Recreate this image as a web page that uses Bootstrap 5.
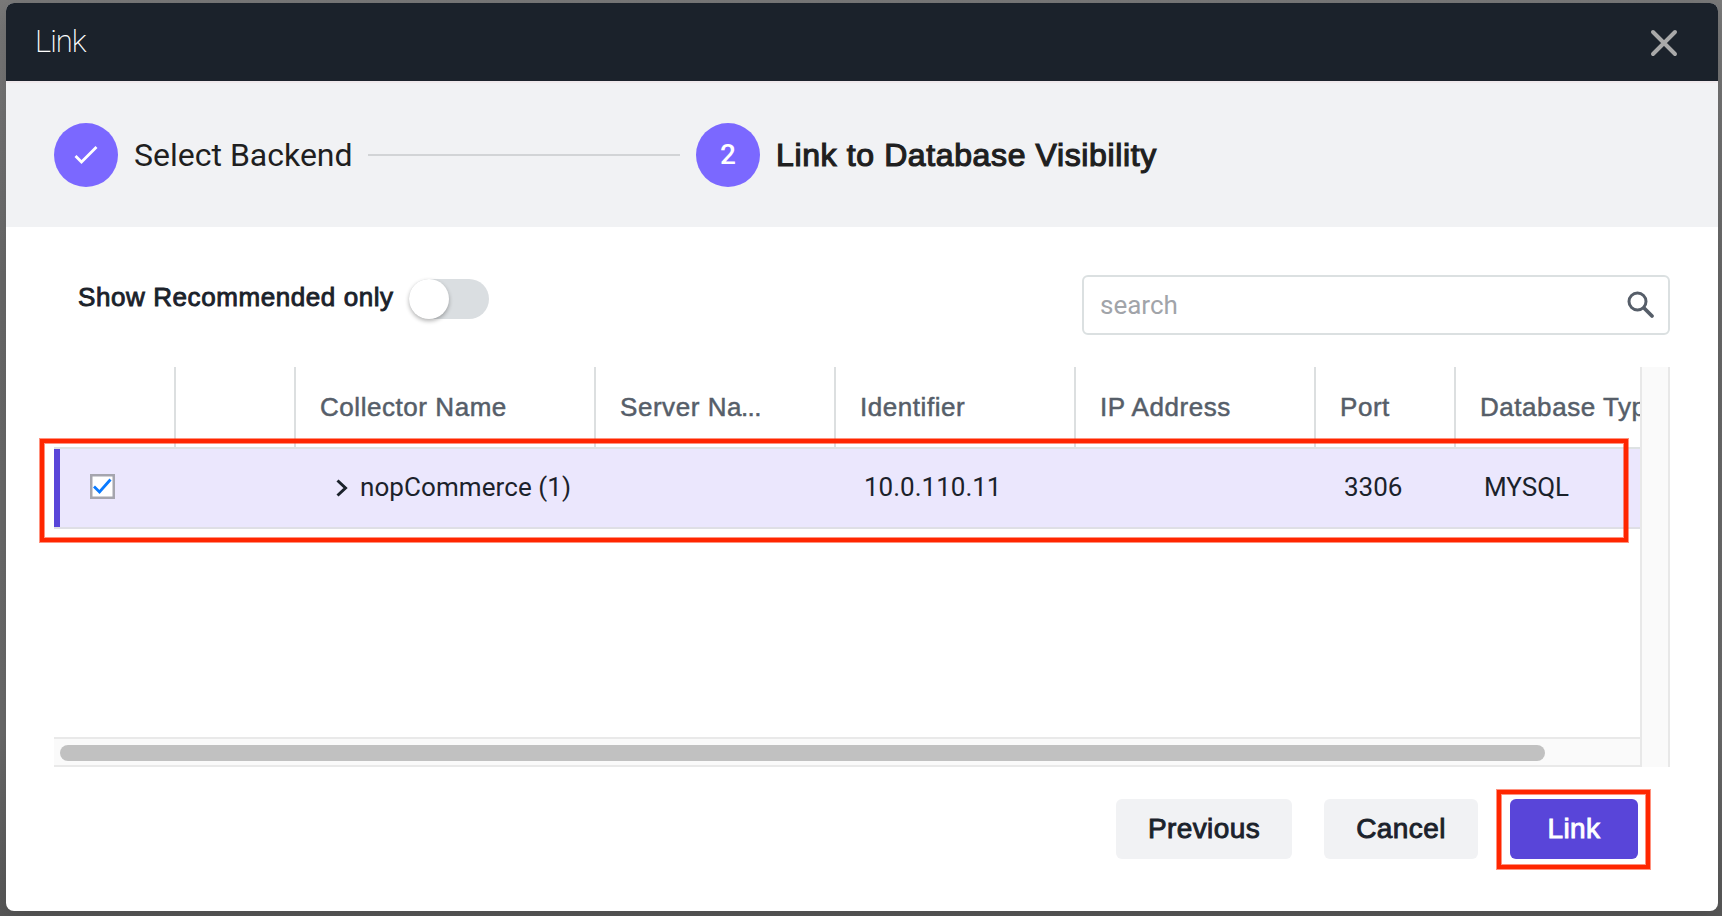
<!DOCTYPE html>
<html lang="en">
<head>
<meta charset="utf-8">
<meta name="viewport" content="width=device-width, initial-scale=1">
<title>Link</title>
<link href="https://cdn.jsdelivr.net/npm/bootstrap@5.3.0/dist/css/bootstrap.min.css" rel="stylesheet">
<style>
  body { background: linear-gradient(#7a7a7a, #696969 30%, #6b6b6b 80%, #585858); height: 916px; overflow: hidden; padding: 3px 4px 5px 6px; font-family: Roboto, sans-serif; font-size: 26px; line-height: 1.2; color: #1b222b; }
  .dialog { height: 908px; background: #fff; border-radius: 8px; overflow: hidden; box-shadow: 0 6px 24px rgba(0,0,0,.15); }
  .dialog-head { height: 80px; background: #1b222b; background-clip: padding-box; border-bottom: 2px solid #efe9ec; padding: 2px 39px 0 29px; }
  .dialog-title { font-family: Roboto, sans-serif; font-weight: 200; font-size: 31px; letter-spacing: -1px; color: #fff; padding-bottom: 2px; }
  .helv { font-family: "Liberation Sans", sans-serif; -webkit-text-stroke: .5px currentColor; }
  .steps { height: 144px; background: #f1f2f4; padding: 0 48px; gap: 16px; font-size: 32px; color: #1f1f1f; }
  .dot { width: 64px; height: 64px; background: #7b68ff; color: #fff; font-size: 28px; font-weight: 500; }
  .step-a { width: 218px; }
  .rule { width: 312px; height: 2px; background: #d2d4d6; }
  .step-now { font-size: 32px; letter-spacing: .62px; -webkit-text-stroke-width: 1.2px; }
  .tools { height: 140px; padding: 48px 48px 0 72px; }
  .tools-label { width: 315px; font-size: 26px; letter-spacing: .58px; -webkit-text-stroke-width: .9px; margin-top: 7px; }
  .toggle { width: 80px; height: 40px; background: #dadee1; margin: 4px 0 0 16px; }
  .knob { width: 40px; height: 40px; background: #fff; box-shadow: 0 2px 4px rgba(0,0,0,.3); }
  .search { width: 588px; height: 60px; border: 2px solid #dbe0e1; border-radius: 6px; padding: 0 13px 0 16px; }
  .search input { font-size: 26px; line-height: 1.2; color: #1b222b; padding: 2px 0 0; }
  .search input::placeholder { color: #a1a4a9; opacity: 1; }
  .search svg { margin-bottom: 1px; }
  .grid-wrap { height: 400px; margin: 0 48px; }
  .grid-main { width: 1586px; }
  .grid-row { display: grid; grid-template-columns: 122px 120px 300px 240px 240px 240px 140px 184px; }
  .grid-head { height: 82px; border-bottom: 2px solid #dee2e3; color: #565e69; letter-spacing: .55px; }
  .grid-head > div { border-right: 2px solid #dcdfe0; padding: 25px 0 0 24px; white-space: nowrap; overflow: hidden; }
  .grid-head > div:last-child { border: 0; }
  .dots { letter-spacing: -.6px; margin-left: -1px; }
  .grid-head, .grid-data { width: 1586px; }
  .grid-data { height: 80px; background: #ebe7fd; background-clip: padding-box; border-bottom: 2px solid #dfdfe5; position: relative; align-items: center; }
  .grid-data > div { padding-left: 28px; white-space: nowrap; }
  .grid-data > div:first-child { align-self: stretch; border-left: 6px solid #5945d9; padding: 0 0 3px 30px; }
  .chev { margin: 0 12px 0 40px; }
  .node-name { letter-spacing: .08px; }
  .hbar { height: 30px; background: #fafafa; border: solid #e9e9e9; border-width: 2px 0; padding: 6px; }
  .thumb { width: 1485px; height: 16px; background: #c1c1c1; border-radius: 8px; }
  .vbar { width: 30px; background: #fafafa; border: solid #e8e8e8; border-width: 0 2px; }
  .mark-box { position: absolute; border: 4px solid #ff2600; box-shadow: 0 0 0 1px rgba(255,38,0,.5), inset 0 0 0 1px rgba(255,38,0,.5); pointer-events: none; }
  .row-mark { left: -14px; top: -10px; width: 1588px; height: 103px; }
  .btn-mark { left: -13px; top: -9px; width: 153px; height: 79px; }
  .foot { padding: 32px 80px 0 0; gap: 32px; }
  .foot .btn { height: 60px; border-radius: 6px; border: 0; padding: 0; font-family: "Liberation Sans", sans-serif; font-size: 28px; letter-spacing: .4px; line-height: 1; color: #1b222b; background: #f1f2f4; -webkit-text-stroke: .9px currentColor; }
  .foot .go { width: 128px; background: #5945d9; color: #fff; }
  svg { display: block; }
</style>
<script src="https://cdn.jsdelivr.net/npm/bootstrap@5.3.0/dist/js/bootstrap.bundle.min.js"></script>
</head>
<body>
<div class="dialog">
  <header class="dialog-head d-flex align-items-center justify-content-between">
    <div class="dialog-title">Link</div>
    <svg width="30" height="30" viewBox="0 0 30 30" stroke="#a9a9a9" stroke-width="4" stroke-linecap="round"><path d="M4 4 26 26M26 4 4 26"/></svg>
  </header>
  <div class="steps d-flex align-items-center">
    <div class="dot rounded-circle d-flex align-items-center justify-content-center">
      <svg width="24" height="20" viewBox="0 0 24 20" fill="none" stroke="#fff" stroke-width="2.8"><path d="M1.5 11 7.500 17 22.500 2"/></svg>
    </div>
    <div class="step-a text-nowrap">Select Backend</div>
    <div class="rule"></div>
    <div class="dot rounded-circle d-flex align-items-center justify-content-center">2</div>
    <div class="helv step-now text-nowrap">Link to Database Visibility</div>
  </div>
  <div class="tools d-flex align-items-start">
    <div class="helv tools-label text-nowrap">Show Recommended only</div>
    <div class="toggle rounded-pill"><div class="knob rounded-circle"></div></div>
    <div class="search d-flex align-items-center ms-auto">
      <input class="form-control border-0 bg-transparent shadow-none" type="text" placeholder="search">
      <svg class="flex-shrink-0" width="28" height="28" viewBox="0 0 28 28" fill="none" stroke="#565e69" stroke-width="3"><circle cx="10.500" cy="10.500" r="8.500"/><path d="M17 17 25 25" stroke-width="3.800" stroke-linecap="round"/></svg>
    </div>
  </div>
  <div class="grid-wrap d-flex">
    <div class="grid-main d-flex flex-column flex-shrink-0">
      <div class="grid-row grid-head helv">
        <div></div><div></div><div>Collector Name</div><div>Server Na<span class="dots">...</span></div><div>Identifier</div><div>IP Address</div><div>Port</div><div>Database Type</div>
      </div>
      <div class="grid-row grid-data">
        <div class="d-flex align-items-center"><svg width="25" height="25" viewBox="0 0 25 25" fill="none"><path d="M1.250 1.250H23.750V23.750H1.250Z" fill="#fff" stroke="#a5a5ae" stroke-width="2.500"/><path d="M4 12.500 9.500 18 20.500 5.500" stroke="#0a7aff" stroke-width="2.800"/></svg></div>
        <div></div>
        <div class="d-flex align-items-center ps-0 node-name"><svg class="chev" width="12" height="18" viewBox="0 0 12 18" fill="none" stroke="#1b222b" stroke-width="3"><path d="M1.500 1.500 9.500 9 1.500 16.500"/></svg>nopCommerce (1)</div>
        <div></div><div>10.0.110.11</div><div></div><div>3306</div><div>MYSQL</div>
        <span class="mark-box row-mark"></span>
      </div>
      <div class="hbar mt-auto"><div class="thumb"></div></div>
    </div>
    <div class="vbar"></div>
  </div>
  <div class="foot d-flex justify-content-end">
    <button class="btn" type="button" style="width:176px">Previous</button>
    <button class="btn" type="button" style="width:154px">Cancel</button>
    <div class="position-relative"><button class="btn go" type="button">Link</button><span class="mark-box btn-mark"></span></div>
  </div>
</div>
</body>
</html>
